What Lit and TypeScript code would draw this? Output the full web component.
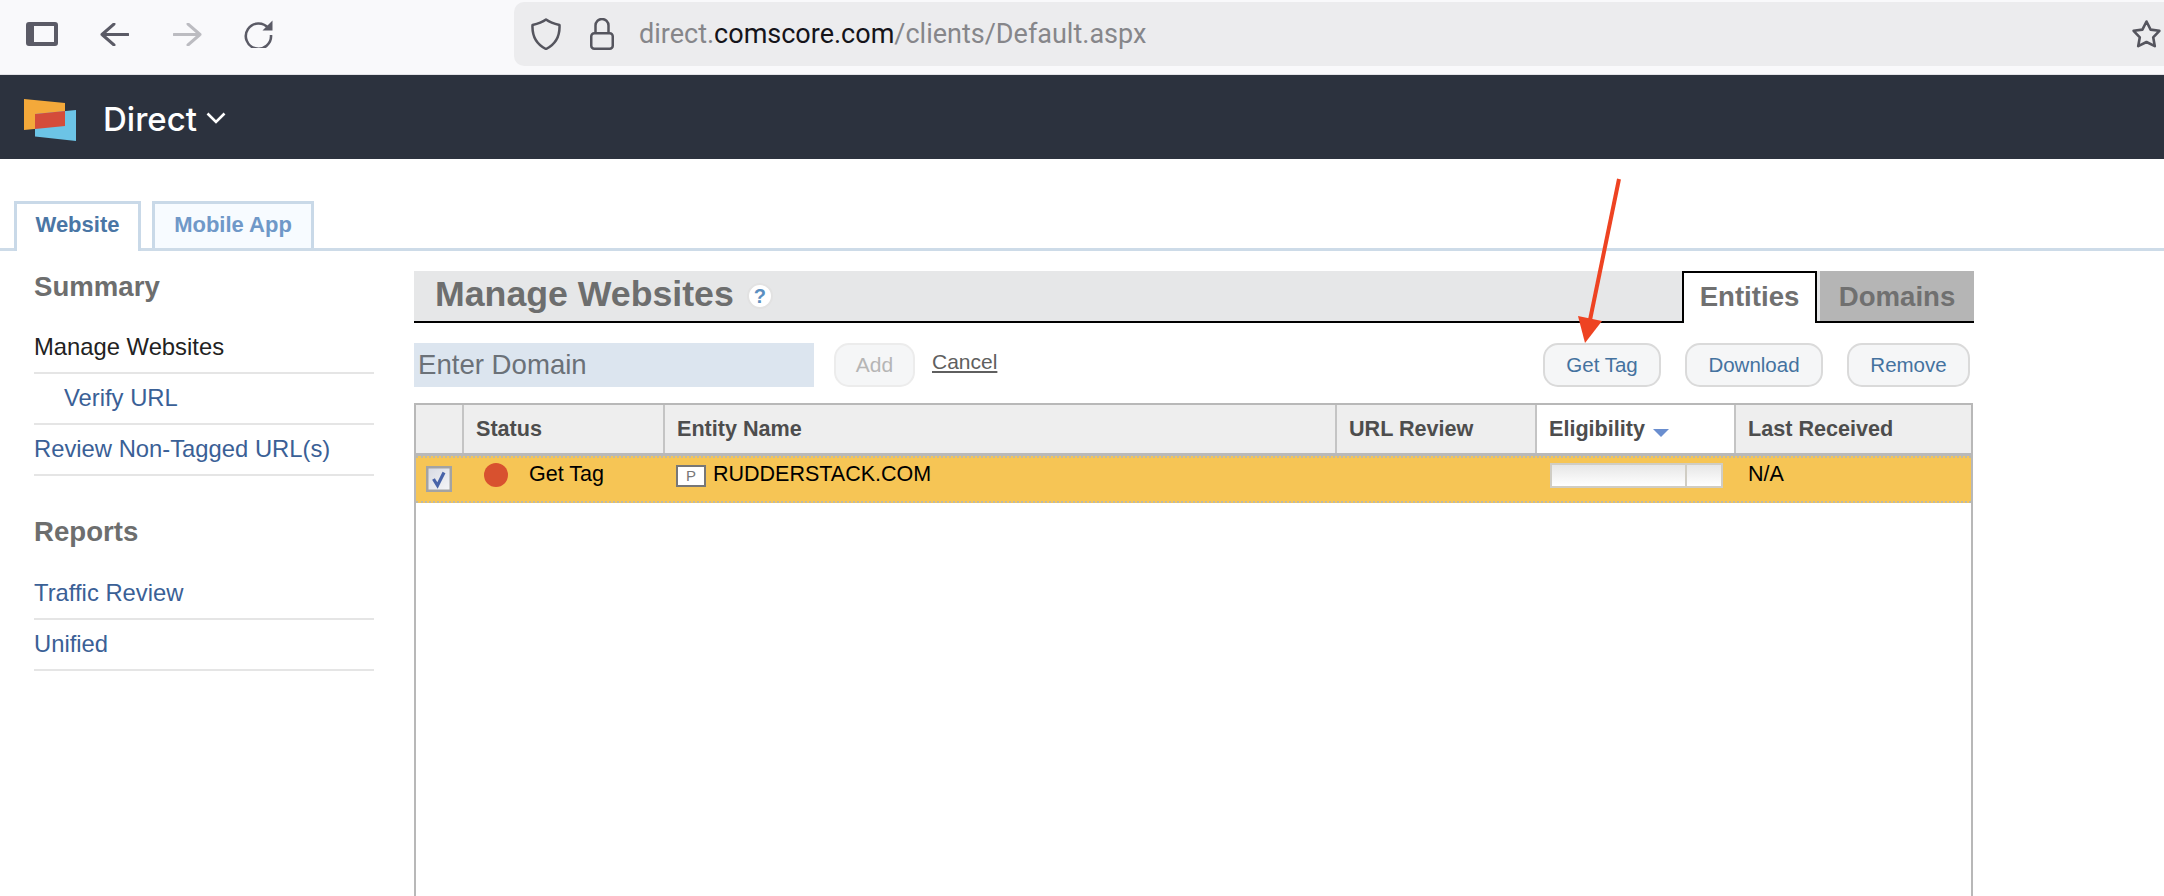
import { LitElement, html, css, svg } from "lit";
import { customElement } from "lit/decorators.js";

@customElement("app-root")
export class AppRoot extends LitElement {
  static styles = css`
    :host {
      display: block;
      position: relative;
      width: 2164px;
      height: 896px;
      overflow: hidden;
      background: #fff;
      font-family: "Liberation Sans", Arial, sans-serif;
    }
    * { box-sizing: border-box; }
    svg { display: block; flex: none; }

    /* browser chrome */
    .chrome {
      height: 75px;
      background: #f9f9fb;
      border-bottom: 1px solid #e2e2e6;
    }
    .chrome-row { height: 68px; display: flex; align-items: center; padding-left: 26px; }
    .i-back { margin-left: 42px; }
    .i-fwd { margin-left: 44px; }
    .i-reload { margin-left: 42px; }
    .pill {
      margin-left: 240px;
      flex: 1;
      height: 64px;
      background: #ececee;
      border-radius: 10px 0 0 10px;
      display: flex;
      align-items: center;
      padding-left: 17px;
      padding-right: 2px;
    }
    .i-lock { margin-left: 29px; }
    .url {
      margin-left: 25px;
      font-family: Roboto, sans-serif;
      font-size: 27px;
      color: #86868a;
      white-space: nowrap;
    }
    .url b { font-weight: 400; color: #15141a; }
    .i-star { margin-left: auto; }

    /* product nav */
    .nav {
      height: 84px;
      background: #2c323e;
      display: flex;
      align-items: flex-start;
      padding: 24px 0 0 24px;
    }
    .brand {
      margin-left: 27px;
      color: #fff;
      font-family: Inter, sans-serif;
      font-weight: 500;
      font-size: 33px;
      line-height: 40px;
    }
    .chev { margin: 13px 0 0 9px; }

    /* tabs */
    .tabs {
      height: 92px;
      padding: 42px 0 0 14px;
      display: flex;
      gap: 11px;
      border-bottom: 3px solid #cddbe8;
    }
    .tab {
      border: 3px solid #c9d9e8;
      border-bottom: 0;
      font-weight: 700;
      font-size: 22px;
      line-height: 42px;
      text-align: center;
    }
    .tab.on { width: 127px; height: 50px; background: #fff; color: #4a76a5; }
    .tab.off { width: 162px; height: 47px; background: #f7fbff; color: #6f98c8; }

    .body { display: flex; padding-left: 34px; }

    /* sidebar */
    .side { width: 340px; flex: none; padding-top: 20px; }
    .side h2 {
      margin: 0 0 20px;
      font-size: 27.6px;
      line-height: 32px;
      font-weight: 700;
      color: #6d6e6e;
    }
    .side h2.second { margin: 40px 0 21px; }
    .item {
      font-size: 23.8px;
      line-height: 48px;
      padding-bottom: 1px;
      border-bottom: 2px solid #e5e5e5;
      color: #3a6096;
    }
    .item.cur { color: #222; }
    .item.sub { padding-left: 30px; }

    /* main */
    .main { margin-left: 40px; width: 1560px; padding-top: 20px; }
    .title {
      height: 52px;
      background: #e6e7e8;
      border-bottom: 2px solid #000;
      display: flex;
      align-items: flex-start;
      padding-left: 21px;
    }
    .title h1 {
      margin: 0;
      font-size: 35.7px;
      line-height: 47px;
      font-weight: 700;
      color: #6d6e6e;
    }
    .help {
      margin: 12px 0 0 13px;
      width: 26px;
      height: 26px;
      border-radius: 50%;
      background: #fff;
      border: 2px solid #e2e2e2;
      color: #5b8fc0;
      font-weight: 700;
      font-size: 20px;
      line-height: 22px;
      text-align: center;
    }
    .view {
      width: 135px;
      height: 52px;
      margin-left: auto;
      background: #fff;
      border: 2px solid #000;
      border-bottom: 0;
      font-size: 27.6px;
      font-weight: 700;
      line-height: 48px;
      text-align: center;
      color: #707070;
    }
    .view.alt {
      width: 154px;
      height: 50px;
      margin-left: 3px;
      background: #b5b5b5;
      border: 0;
      line-height: 52px;
    }

    .actions { margin-top: 20px; height: 44px; display: flex; align-items: flex-start; padding-right: 4px; }
    .domain {
      width: 400px;
      height: 44px;
      background: #dce5ef;
      color: #6b7178;
      font-size: 27.6px;
      line-height: 44px;
      padding-left: 4px;
    }
    .btn {
      height: 44px;
      border: 2px solid #dadada;
      border-radius: 15px;
      background: #f5f6f7;
      color: #44729f;
      font-size: 20.5px;
      line-height: 40px;
      text-align: center;
    }
    .btn.add { width: 81px; margin-left: 20px; border-color: #ececec; color: #b5b5b5; font-size: 21px; }
    .cancel {
      margin-left: 17px;
      font-size: 21px;
      line-height: 38px;
      color: #5f5f5f;
      text-decoration: underline;
    }
    .right { margin-left: auto; display: flex; gap: 24px; }
    .w1 { width: 118px; }
    .w2 { width: 138px; }
    .w3 { width: 123px; }

    .table {
      margin-top: 16px;
      width: 1559px;
      height: 493px;
      border: 2px solid #b8b8b8;
      border-bottom: 0;
    }
    .cols { display: grid; grid-template-columns: 48px 201px 672px 200px 199px 235px; }
    .head {
      height: 51px;
      background: #eee;
      border-bottom: 3px solid #b8b8b8;
    }
    .th {
      border-right: 2px solid #c4c4c4;
      padding-left: 12px;
      font-size: 21.6px;
      font-weight: 700;
      line-height: 48px;
      color: #4d4d4d;
      display: flex;
      align-items: flex-start;
    }
    .th:last-child { border-right: 0; }
    .th.sorted { background: #fff; }
    .sort { margin: 24px 0 0 8px; }

    .row {
      height: 47px;
      background: #f6c555;
      border-top: 2px dotted #bdb9a6;
      border-bottom: 2px dotted #bdb9a6;
    }
    .td {
      font-size: 21.5px;
      line-height: 32px;
      color: #000;
      display: flex;
      align-items: flex-start;
    }
    .c-check { padding: 8px 0 0 10px; }
    .c-status { padding-left: 20px; }
    .dot {
      width: 24px;
      height: 24px;
      margin: 5px 21px 0 0;
      border-radius: 50%;
      background: #d8512f;
    }
    .c-entity { padding-left: 11px; }
    .badge {
      width: 30px;
      height: 22px;
      margin: 7px 7px 0 0;
      background: #fff;
      border: 2px solid #777;
      color: #777;
      font-size: 15px;
      line-height: 18px;
      text-align: center;
    }
    .c-bar { padding: 5px 0 0 13px; }
    .bar {
      width: 173px;
      height: 25px;
      display: flex;
      border: 2px solid #d0cdc4;
      background: linear-gradient(#e6e6e6, #fff);
    }
    .bar i { display: block; width: 135px; border-right: 2px solid #d0cdc4; }
    .c-last { padding-left: 12px; }

    .arrow { position: absolute; left: 1570px; top: 175px; }
  `;

  private sideIcon() {
    return html`<svg width="32" height="24" viewBox="0 0 32 24"><path fill="#5b5b66" fill-rule="evenodd" d="M3 0h26a3 3 0 0 1 3 3v18a3 3 0 0 1-3 3H3a3 3 0 0 1-3-3V3a3 3 0 0 1 3-3zM8 4v16h20V4z"/></svg>`;
  }
  private arrowIcon(cls: string, color: string, flip: boolean) {
    const d = flip ? "M1 11.5h26M15 1l12 10.5L15 22" : "M28 11.5H2M14 1L2 11.5 14 22";
    return html`<svg class=${cls} width="29" height="23" viewBox="0 0 29 23"><path fill="none" stroke=${color} stroke-width="3" stroke-linecap="round" stroke-linejoin="round" d=${d}/></svg>`;
  }
  private reloadIcon() {
    return html`<svg class="i-reload" width="30" height="28" viewBox="0 0 30 28">
      <path fill="none" stroke="#5b5b66" stroke-width="2.6" d="M24.5 8.5A12.6 12.6 0 1 0 27 15"/>
      <path fill="#5b5b66" d="M28.5 0.5v10h-10z"/>
    </svg>`;
  }
  private shieldIcon() {
    return html`<svg width="30" height="32" viewBox="0 0 30 32"><path fill="none" stroke="#55555e" stroke-width="2.5" stroke-linejoin="round" d="M15 1.5C11 4.5 6 6 1.5 7 1 18 5 26 15 31 25 26 29 18 28.5 7 24 6 19 4.5 15 1.5Z"/></svg>`;
  }
  private lockIcon() {
    return html`<svg class="i-lock" width="24" height="32" viewBox="0 0 24 32" fill="none" stroke="#55555e" stroke-width="2.5">
      <path d="M5.5 15V7.5a6.5 6.5 0 0 1 13 0V15"/>
      <rect x="1.25" y="15.25" width="21.5" height="15.5" rx="3"/>
    </svg>`;
  }
  private starIcon() {
    return html`<svg class="i-star" width="31" height="30" viewBox="0 0 31 30"><path fill="none" stroke="#55555e" stroke-width="2.6" stroke-linejoin="round" d="M15.5 2.5 19.6 10.6 28.4 11.8 22.2 18.3 23.8 27.2 15.5 23 7.2 27.2 8.8 18.3 2.6 11.8 11.4 10.6Z"/></svg>`;
  }
  private logo() {
    return html`<svg width="52" height="42" viewBox="0 0 52 42">
      <path fill="#f4a93a" d="M0 0 41 4V27L0 31Z"/>
      <path fill="#6cc4e6" d="M11 15 52 11V42L11 37.5Z"/>
      <path fill="#d44c3a" d="M11 15 41 12V27L11 30Z"/>
    </svg>`;
  }
  private check() {
    return html`<svg width="26" height="26" viewBox="0 0 26 26">
      <defs><linearGradient id="cb" x1="0" y1="0" x2="1" y2="1"><stop offset="0" stop-color="#d6d9e2"/><stop offset="1" stop-color="#f6f6f8"/></linearGradient></defs>
      <rect x="1.25" y="1.25" width="23.5" height="23.5" fill="url(#cb)" stroke="#a3a3a3" stroke-width="2.5"/>
      <path fill="none" stroke="#4863a8" stroke-width="3.2" d="M7.5 13 11.5 19.5 18 6.5"/>
    </svg>`;
  }

  render() {
    return html`
      <div class="chrome">
        <div class="chrome-row">
          ${this.sideIcon()}
          ${this.arrowIcon("i-back", "#5b5b66", false)}
          ${this.arrowIcon("i-fwd", "#bcbcc1", true)}
          ${this.reloadIcon()}
          <div class="pill">
            ${this.shieldIcon()}
            ${this.lockIcon()}
            <span class="url">direct.<b>comscore.com</b>/clients/Default.aspx</span>
            ${this.starIcon()}
          </div>
        </div>
      </div>

      <div class="nav">
        ${this.logo()}
        <span class="brand">Direct</span>
        <svg class="chev" width="20" height="12" viewBox="0 0 20 12"><path fill="none" stroke="#fff" stroke-width="2.6" d="M1.5 1.5 10 10 18.5 1.5"/></svg>
      </div>

      <div class="tabs">
        <div class="tab on">Website</div>
        <div class="tab off">Mobile App</div>
      </div>

      <div class="body">
        <aside class="side">
          <h2>Summary</h2>
          <div class="item cur">Manage Websites</div>
          <div class="item sub">Verify URL</div>
          <div class="item">Review Non-Tagged URL(s)</div>
          <h2 class="second">Reports</h2>
          <div class="item">Traffic Review</div>
          <div class="item">Unified</div>
        </aside>

        <main class="main">
          <div class="title">
            <h1>Manage Websites</h1>
            <div class="help">?</div>
            <div class="view">Entities</div>
            <div class="view alt">Domains</div>
          </div>

          <div class="actions">
            <div class="domain">Enter Domain</div>
            <div class="btn add">Add</div>
            <span class="cancel">Cancel</span>
            <div class="right">
              <div class="btn w1">Get Tag</div>
              <div class="btn w2">Download</div>
              <div class="btn w3">Remove</div>
            </div>
          </div>

          <div class="table">
            <div class="cols head">
              <div class="th"></div>
              <div class="th">Status</div>
              <div class="th">Entity Name</div>
              <div class="th">URL Review</div>
              <div class="th sorted">Eligibility
                <svg class="sort" width="16" height="8" viewBox="0 0 16 8"><path fill="#6a8ecf" d="M0 0h16L8 8z"/></svg>
              </div>
              <div class="th">Last Received</div>
            </div>
            <div class="cols row">
              <div class="td c-check">${this.check()}</div>
              <div class="td c-status"><span class="dot"></span>Get Tag</div>
              <div class="td c-entity"><span class="badge">P</span>RUDDERSTACK.COM</div>
              <div class="td"></div>
              <div class="td c-bar"><div class="bar"><i></i></div></div>
              <div class="td c-last">N/A</div>
            </div>
          </div>
        </main>
      </div>

      <svg class="arrow" width="60" height="175" viewBox="0 0 60 175">
        <path fill="none" stroke="#ee4322" stroke-width="4" d="M49 4 20 145"/>
        <path fill="#ee4322" d="M15 168 8 141 32 146Z"/>
      </svg>
    `;
  }
}
